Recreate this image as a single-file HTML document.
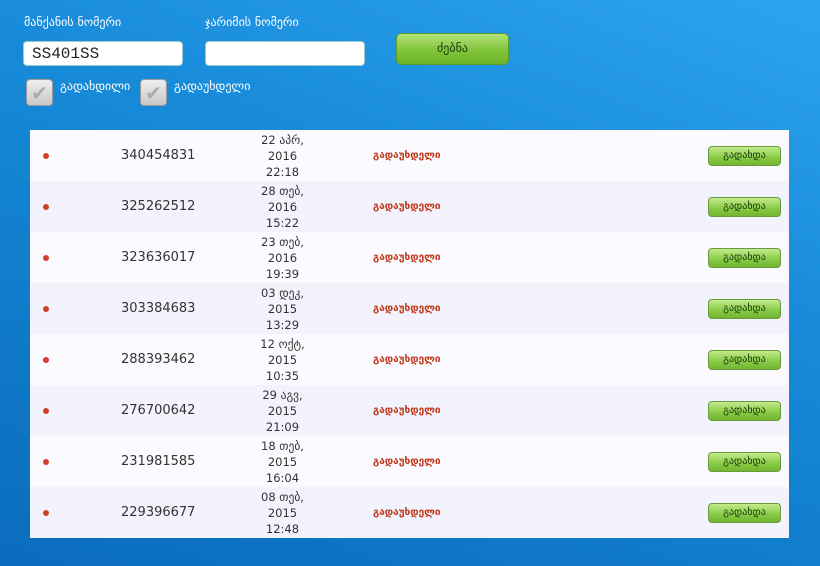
<!DOCTYPE html>
<html><head><meta charset="utf-8"><style>
body{margin:0;width:820px;height:566px;overflow:hidden;font-family:"DejaVu Sans","Liberation Sans","Noto Sans CJK JP",sans-serif;background:linear-gradient(200deg,#2ea3f0 0%,#168ad8 40%,#0a6cbc 100%);position:relative}
.lbl{position:absolute;color:#fff;font-size:12px;top:15px}
.inp{position:absolute;top:41px;height:25px;background:#fff;border-radius:4px;border:1px solid #9cc;box-sizing:border-box;font-family:"Liberation Mono",monospace;font-size:16px;padding:3px 8px;color:#222}
.btn{position:absolute;left:396px;top:33px;width:113px;height:32px;border-radius:5px;background:linear-gradient(#b6e27a,#7fc43a 55%,#6db22a);border:1px solid #5a9a2a;box-sizing:border-box;text-align:center;font-size:12px;line-height:28px;color:#1a3a0a}
.cb{position:absolute;top:79px;width:27px;height:27px;border-radius:4px;background:linear-gradient(#eee,#c8c8c8);border:1px solid #999;box-sizing:border-box;color:#aaa;font-size:20px;text-align:center;line-height:26px}
.cbl{position:absolute;top:79px;color:#fff;font-size:12px}
table{position:absolute;left:30px;top:130px;width:759px;border-collapse:collapse;table-layout:fixed}
td{height:51px;padding:0;font-size:13px;color:#333;overflow:hidden;white-space:nowrap}
tr:nth-child(odd){background:#fbfbff}tr:nth-child(even){background:#f2f3fc}
.dot{width:6px;height:6px;border-radius:50%;background:#d0402a;margin-left:13px}
.n{padding-left:31px}
.d{text-align:center;font-size:11.5px;line-height:16px}
.s{color:#c0381a;font-weight:bold;font-size:10px;padding-left:28px}
.rb{width:73px;height:20px;border-radius:4px;background:linear-gradient(#c4eb8c,#86c944 60%,#72b530);border:1px solid #6a9a40;box-sizing:border-box;font-size:10px;text-align:center;line-height:18px;color:#1a3a0a;margin-left:auto;margin-right:8px}
</style></head><body>
<div class="lbl" style="left:24px">მანქანის ნომერი</div>
<div class="lbl" style="left:205px">ჯარიმის ნომერი</div>
<div class="inp" style="left:23px;width:160px">SS401SS</div>
<div class="inp" style="left:205px;width:160px"></div>
<div class="btn">ძებნა</div>
<div class="cb" style="left:26px">✔</div><div class="cbl" style="left:60px">გადახდილი</div>
<div class="cb" style="left:140px">✔</div><div class="cbl" style="left:174px">გადაუხდელი</div>
<table>
<colgroup><col style="width:60px"><col style="width:130px"><col style="width:125px"><col style="width:200px"><col></colgroup>
<tr><td><div class="dot"></div></td><td class="n">340454831</td><td class="d">22 აპრ,<br>2016<br>22:18</td><td class="s">გადაუხდელი</td><td><div class="rb">გადახდა</div></td></tr>
<tr><td><div class="dot"></div></td><td class="n">325262512</td><td class="d">28 თებ,<br>2016<br>15:22</td><td class="s">გადაუხდელი</td><td><div class="rb">გადახდა</div></td></tr>
<tr><td><div class="dot"></div></td><td class="n">323636017</td><td class="d">23 თებ,<br>2016<br>19:39</td><td class="s">გადაუხდელი</td><td><div class="rb">გადახდა</div></td></tr>
<tr><td><div class="dot"></div></td><td class="n">303384683</td><td class="d">03 დეკ,<br>2015<br>13:29</td><td class="s">გადაუხდელი</td><td><div class="rb">გადახდა</div></td></tr>
<tr><td><div class="dot"></div></td><td class="n">288393462</td><td class="d">12 ოქტ,<br>2015<br>10:35</td><td class="s">გადაუხდელი</td><td><div class="rb">გადახდა</div></td></tr>
<tr><td><div class="dot"></div></td><td class="n">276700642</td><td class="d">29 აგვ,<br>2015<br>21:09</td><td class="s">გადაუხდელი</td><td><div class="rb">გადახდა</div></td></tr>
<tr><td><div class="dot"></div></td><td class="n">231981585</td><td class="d">18 თებ,<br>2015<br>16:04</td><td class="s">გადაუხდელი</td><td><div class="rb">გადახდა</div></td></tr>
<tr><td><div class="dot"></div></td><td class="n">229396677</td><td class="d">08 თებ,<br>2015<br>12:48</td><td class="s">გადაუხდელი</td><td><div class="rb">გადახდა</div></td></tr>
</table>
</body></html>
